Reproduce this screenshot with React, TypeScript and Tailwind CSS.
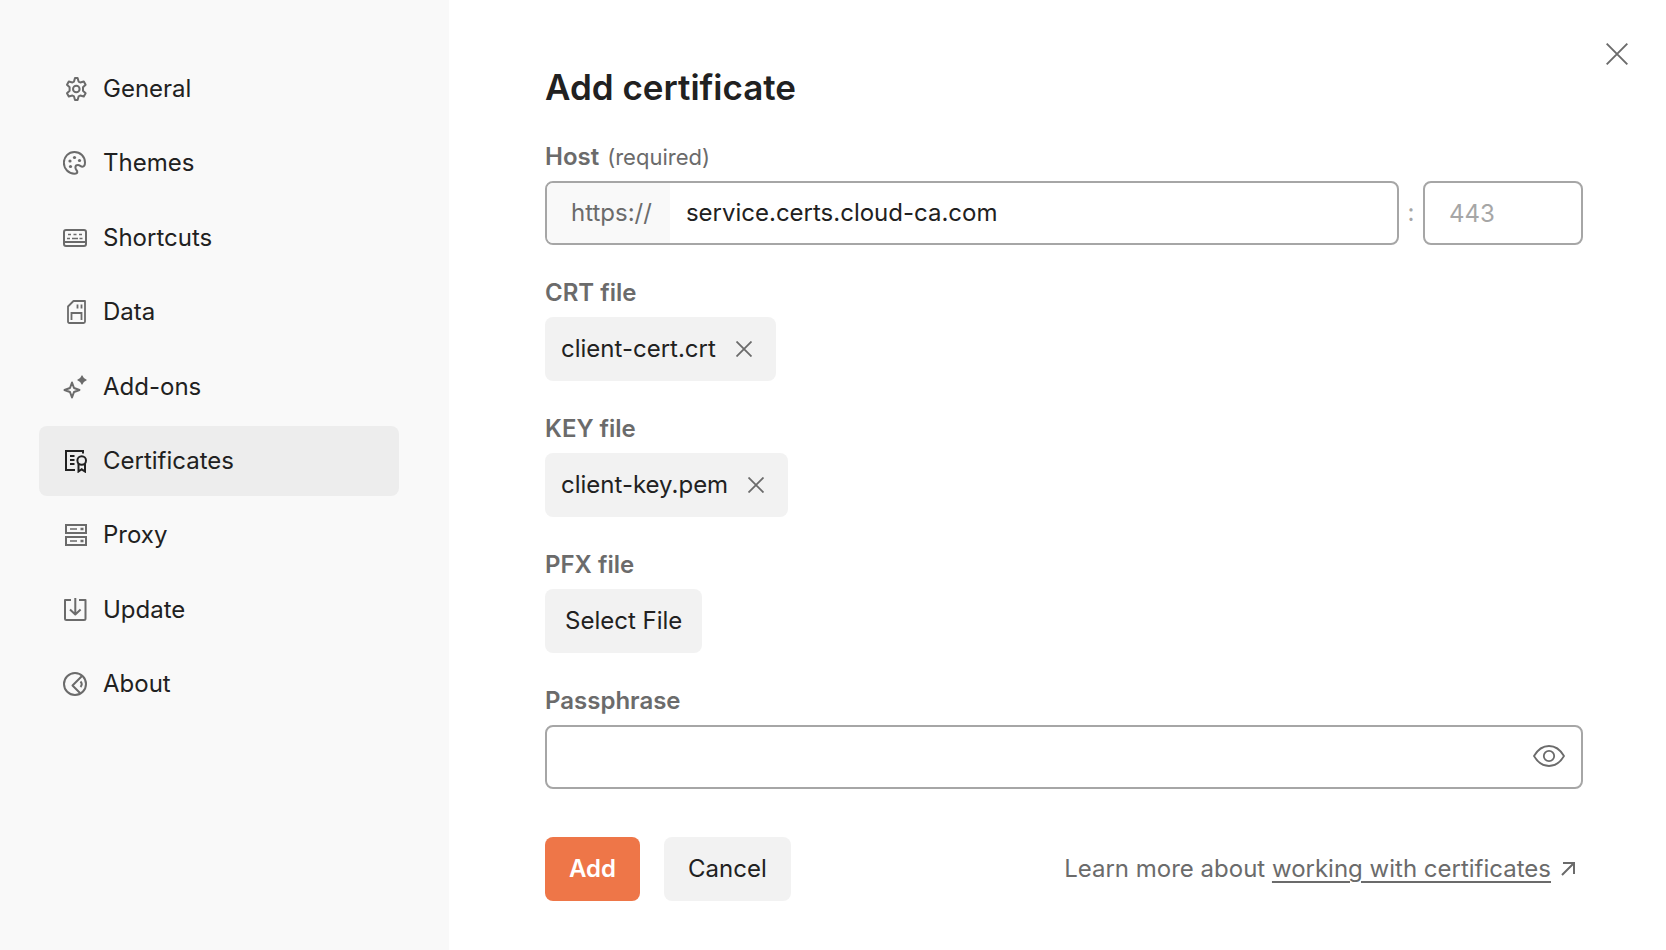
import { useState, type ReactNode } from "react";

function Icon({ children }: { children: ReactNode }) {
  return (
    <svg
      viewBox="0 0 24 24"
      fill="none"
      stroke="currentColor"
      strokeWidth="2"
      className="size-6 shrink-0"
      aria-hidden="true"
    >
      {children}
    </svg>
  );
}

const items: { label: string; icon: ReactNode }[] = [
  {
    label: "General",
    icon: (
      <>
        <path
          strokeLinejoin="round"
          d="M12 1h2.600l1 3.600 1.600.9 3.600-1 1.800 3.300-2.600 2.500v3.400l2.600 2.500-1.800 3.300-3.600-1-1.600.9-1 3.600h-2.600l-1-3.600-1.600-.9-3.600 1L4 16.200l2.600-2.500v-3.400L4 7.800l1.800-3.300 3.600 1 1.600-.9z"
        />
        <circle cx="13.300" cy="12" r="3.300" />
      </>
    ),
  },
  {
    label: "Themes",
    icon: (
      <>
        <path
          strokeLinejoin="round"
          d="M11.400 1A10.500 10.800 0 1 0 11.400 22.700C13.300 22.700 14.300 22 14.300 21 14.300 19.500 12.400 18.500 12.400 16.400 12.400 14.700 13.600 14 15 14 17 14 17.500 15.700 19.400 15.700 21 15.700 22 14 22 11.600 22 5.500 17.300 1 11.400 1z"
        />
        <g fill="currentColor" stroke="none">
          <circle cx="11.500" cy="6.500" r="1.600" />
          <circle cx="16.500" cy="9.500" r="1.600" />
          <circle cx="7" cy="10" r="1.600" />
          <circle cx="7.500" cy="15.500" r="1.600" />
        </g>
      </>
    ),
  },
  {
    label: "Shortcuts",
    icon: (
      <>
        <rect x="1" y="4" width="22" height="16" rx="2" />
        <path d="M1 16h22" />
        <path d="M5 8.500h3M10.500 8.500h3M16 8.500h3M4 12.500h3M9 12.500h6M16.500 12.500h3" strokeWidth="1.700" />
      </>
    ),
  },
  {
    label: "Data",
    icon: (
      <>
        <path
          strokeLinejoin="round"
          strokeWidth="1.800"
          d="M10.500 1H22v20.500q0 1.500-1.500 1.500h-14q-1.500 0-1.500-1.500V6.500z"
        />
        <path d="M8.500 20v-7h10v7M14.500 4.500v4M18.500 4.500v4" strokeWidth="1.800" />
      </>
    ),
  },
  {
    label: "Add-ons",
    icon: (
      <>
        <path strokeLinejoin="round" d="M9 7.500L11 13l5.500 2-5.500 2-2 5.500L7 17l-5.500-2L7 13z" />
        <path
          fill="currentColor"
          stroke="none"
          d="M19 0l1.900 3.100L24 5l-3.100 1.900L19 10l-1.900-3.100L14 5l3.100-1.900z"
        />
      </>
    ),
  },
  {
    label: "Certificates",
    icon: (
      <>
        <path d="M20 4.500V2H3v19h9M7 7h4.500M7 11h4.500M7 15h4.500" />
        <circle cx="18.700" cy="11.500" r="4.300" />
        <path d="M15.500 14.500v8l3.200-2.200 3.300 2.200v-8" />
      </>
    ),
  },
  {
    label: "Proxy",
    icon: (
      <>
        <path d="M3 2h20v8H3zM3 14h20v8H3z" />
        <path d="M7 6h7M7 18h7" strokeWidth="1.700" />
        <path d="M17.500 6h3M17.500 18h3" strokeWidth="2.400" />
      </>
    ),
  },
  {
    label: "Update",
    icon: (
      <path
        strokeLinejoin="round"
        d="M8 2H2V20.500q0 1.500 1.500 1.500h17.500q1.500 0 1.500-1.500V2H16M12.300 0v16.500M7 11.500l5.300 5 5.300-5"
      />
    ),
  },
  {
    label: "About",
    icon: (
      <>
        <circle cx="12" cy="12" r="11" />
        <path strokeLinejoin="round" d="M19 4L9.500 13.500 17 21M17.500 9.500q2.500 2.700 0 5.500" />
      </>
    ),
  },
];

function Field({ id, label, note, children }: { id: string; label: string; note?: string; children: ReactNode }) {
  return (
    <div className="flex flex-col gap-2">
      <label htmlFor={id} className="text-2xl leading-8 font-semibold text-[#6b6b6b]">
        {label}
        {note && <span className="ml-2 text-[22px] font-normal">{note}</span>}
      </label>
      {children}
    </div>
  );
}

function Cross({ className }: { className: string }) {
  return (
    <svg viewBox="0 0 16 16" fill="none" stroke="currentColor" className={className} aria-hidden="true">
      <path d="M.5 .5l15 15M15.500 .5l-15 15" />
    </svg>
  );
}

function FileChip({ id, name }: { id: string; name: string }) {
  return (
    <div className="flex h-16 items-center gap-5 self-start rounded-lg bg-[#f2f2f2] pr-6 pl-4">
      <output id={id}>{name}</output>
      <button type="button" aria-label={`Remove ${name}`} className="text-[#6b6b6b]">
        <Cross className="size-4 stroke-[1.8]" />
      </button>
    </div>
  );
}

export default function App() {
  const [active, setActive] = useState("Certificates");
  const [visible, setVisible] = useState(false);

  return (
    <div className="flex min-h-screen bg-white font-[Inter,sans-serif] text-2xl leading-8 text-[#212121]">
      <aside className="w-[449px] shrink-0 bg-[#f9f9f9] py-[54px] pr-[50px] pl-[39px]">
        <nav className="flex h-[665px] flex-col justify-between">
          {items.map(({ label, icon }) => (
            <button
              key={label}
              type="button"
              onClick={() => setActive(label)}
              className={
                "flex h-[70px] items-center gap-4 rounded-lg px-6 text-left " + (active === label ? "bg-[#ededed]" : "")
              }
            >
              <span className={active === label ? "text-[#212121]" : "text-[#6b6b6b]"}>
                <Icon>{icon}</Icon>
              </span>
              {label}
            </button>
          ))}
        </nav>
      </aside>

      <main className="relative min-w-0 flex-1 pt-[67px] pr-[83px] pb-12 pl-24">
        <button type="button" aria-label="Close" className="absolute top-[43px] right-[38px] text-[#6b6b6b]">
          <Cross className="size-[22px] stroke-[1.4]" />
        </button>
        <h1 className="text-[35px] leading-10 font-semibold">Add certificate</h1>

        <form className="mt-[34px] flex flex-col gap-8" onSubmit={(e) => e.preventDefault()}>
          <Field id="host" label="Host" note="(required)">
            <div className="flex items-center">
              <div className="flex h-16 min-w-0 flex-1 overflow-hidden rounded-lg border-2 border-[#a6a6a6]">
                <span className="flex items-center bg-[#f9f9f9] pr-[18px] pl-6 text-[#6b6b6b]">https://</span>
                <input
                  id="host"
                  defaultValue="service.certs.cloud-ca.com"
                  className="min-w-0 flex-1 px-4 outline-none"
                />
              </div>
              <span className="w-6 text-center text-[#a6a6a6]">:</span>
              <input
                aria-label="Port"
                placeholder="443"
                className="h-16 w-40 rounded-lg border-2 border-[#a6a6a6] px-6 outline-none placeholder:text-[#a6a6a6]"
              />
            </div>
          </Field>

          <Field id="crt" label="CRT file">
            <FileChip id="crt" name="client-cert.crt" />
          </Field>

          <Field id="key" label="KEY file">
            <FileChip id="key" name="client-key.pem" />
          </Field>

          <Field id="pfx" label="PFX file">
            <button id="pfx" type="button" className="h-16 self-start rounded-lg bg-[#f2f2f2] px-5">
              Select File
            </button>
          </Field>

          <Field id="passphrase" label="Passphrase">
            <div className="flex h-16 items-center rounded-lg border-2 border-[#a6a6a6] pr-4">
              <input
                id="passphrase"
                type={visible ? "text" : "password"}
                className="h-full min-w-0 flex-1 px-4 outline-none"
              />
              <button
                type="button"
                aria-label="Show passphrase"
                onClick={() => setVisible(!visible)}
                className="text-[#6b6b6b]"
              >
                <svg viewBox="0 0 32 24" fill="none" stroke="currentColor" strokeWidth="1.800" className="h-6 w-8">
                  <path
                    strokeLinejoin="round"
                    d="M1 11C4.500 5 10 1 16 1S27.500 5 31 11C27.500 17 22 21 16 21S4.500 17 1 11z"
                  />
                  <circle cx="16" cy="11" r="5.200" />
                </svg>
              </button>
            </div>
          </Field>

          <div className="mt-4 flex items-center gap-6">
            <button type="submit" className="h-16 rounded-lg bg-[#ee7648] px-6 font-semibold text-white">
              Add
            </button>
            <button type="button" className="h-16 rounded-lg bg-[#f2f2f2] px-6">
              Cancel
            </button>
            <p className="ml-auto flex items-center gap-2.5 pr-2 text-[#6b6b6b]">
              <span>
                Learn more about{" "}
                <a href="#certificates" className="underline decoration-2 underline-offset-4">
                  working with certificates
                </a>
              </span>
              <svg viewBox="0 0 14 14" fill="none" stroke="currentColor" strokeWidth="2" className="size-3.5">
                <path d="M1 13L13 1M2 1h11v11" />
              </svg>
            </p>
          </div>
        </form>
      </main>
    </div>
  );
}
